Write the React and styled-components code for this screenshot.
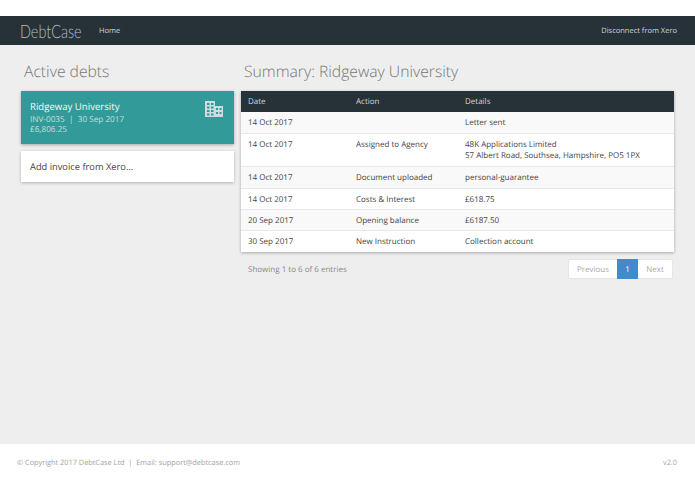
import React from "react";
import styled, { createGlobalStyle } from "styled-components";

const Global = createGlobalStyle`
  html, body { margin: 0; padding: 0; height: 100%; }
  body { background: #fff; font-family: "Open Sans", "Liberation Sans", sans-serif; font-size: 8px; color: #333; text-rendering: geometricPrecision; }
  #root { height: 100%; }
`;
const Page = styled.div`
  height: 494px; display: flex; flex-direction: column; padding-top: 16px; box-sizing: border-box;
`;
const Nav = styled.header`
  height: 29px; background: #263238; display: flex; align-items: center; padding: 0 18px 0 20px; color: #cfd8dc;
  box-shadow: 0 1px 1px rgba(0,0,0,.15);
`;
const Brand = styled.span`
  font-family: Lato, sans-serif; font-weight: 300; font-size: 18.5px; color: #b4bec3; width: 79px;
  transform: scaleX(.78); transform-origin: left center; white-space: nowrap;
`;
const NavLink = styled.a`
  font-size: 7.5px; color: #cfd8dc; margin-right: ${p => (p.$push ? "auto" : "0")};
`;
const Main = styled.main`
  flex: 1; background: #eeeeee; display: grid; grid-template-columns: 213px 433px; column-gap: 7px; padding: 0 21px;
  align-content: start;
`;
const Column = styled.section`
  display: flex; flex-direction: column; min-width: 0;
`;
const Heading = styled.h2`
  margin: 0; font-size: 15.7px; font-weight: 300; color: #757575; height: 46px; line-height: 52px; padding-left: 3px; white-space: nowrap;
`;
const DebtCard = styled.div`
  height: 53px; background: #329a98; color: #fff; box-shadow: 0 1px 3px rgba(0,0,0,.3); padding: 9px 11px 0 9px; box-sizing: border-box;
  display: flex; justify-content: space-between; align-items: flex-start;
`;
const DebtName = styled.div`
  font-size: 9.6px; font-weight: 500; line-height: 14px; margin-bottom: 1px; color: #f2f9f9;
`;
const DebtMeta = styled.div`
  font-size: 8.2px; line-height: 10px; color: #c3e0df; white-space: pre;
`;
const IconSlot = styled.svg`
  width: 18px; height: 17px; margin-top: 1px; color: #cbdedd;
`;
const AddCard = styled.div`
  margin-top: 7px; height: 31px; background: #fff; box-shadow: 0 1px 3px rgba(0,0,0,.25); padding-left: 9px; box-sizing: border-box; display: flex; align-items: center;
  font-size: 9.3px; color: #444;
`;
const TableCard = styled.div`
  background: #fff; box-shadow: 0 1px 3px rgba(0,0,0,.3);
`;
const Table = styled.table`
  width: 100%; border-collapse: separate; border-spacing: 0; table-layout: fixed;
`;
const Th = styled.th`
  background: #263238; color: #cfd8dc; font-size: 8px; font-weight: 400; text-align: left; height: 21px; padding: 0 7px; box-sizing: border-box;
`;
const Row = styled.tr`
  background: ${p => (p.$odd ? "#f9f9f9" : "#fff")};
`;
const Td = styled.td`
  font-size: 8px; line-height: 11px; padding: 5px 7px 0; color: #444; vertical-align: top; box-sizing: border-box;
  height: ${p => p.$h}px; border-top: ${p => (p.$first ? "0" : "1px solid #e8e8e8")};
`;
const Under = styled.div`
  display: flex; justify-content: space-between; align-items: center; padding: 7px 0 0 7px; color: #888;
`;
const Info = styled.span`font-size: 8px;`;
const Pager = styled.nav`
  display: flex; height: 20px; border: 1px solid #e6e6e6; background: #fff; border-radius: 2px; margin-right: 1px; box-sizing: border-box; align-items: stretch;
`;
const PageBtn = styled.span`
  font-size: 8px; display: flex; align-items: center; justify-content: center; width: ${p => p.$w}px;
  color: ${p => (p.$on ? "#fff" : "#aaa")}; background: ${p => (p.$on ? "#428bca" : "transparent")};
  ${p => p.$on && "margin: -1px 0;"}
`;
const Footer = styled.footer`
  height: 50px; background: #fff; display: flex; justify-content: space-between; padding: 14px 18px 0 17px; box-sizing: border-box;
  font-size: 7.35px; color: #a3a3a3; line-height: 11px; white-space: pre;
`;

const rows = [
  ["14 Oct 2017", "", ["Letter sent"], 21],
  ["14 Oct 2017", "Assigned to Agency", ["48K Applications Limited", "57 Albert Road, Southsea, Hampshire, PO5 1PX"], 33],
  ["14 Oct 2017", "Document uploaded", ["personal-guarantee"], 22],
  ["14 Oct 2017", "Costs & Interest", ["£618.75"], 21],
  ["20 Sep 2017", "Opening balance", ["£6187.50"], 21],
  ["30 Sep 2017", "New Instruction", ["Collection account"], 22],
];

const Building = () => (
  <IconSlot viewBox="0 0 18 17">
    <path fill="currentColor" fillRule="evenodd"
      d="M0 16V0h10v5h8v11zM2 2v2h2.500V2zM6 2v2h2.500V2zM2 5.500v2h2.500v-2zM6 5.500v2h2.500v-2zM2 9v2h2.500V9zM6 9v2h2.500V9zM2 12.500v2h2.500v-2zM6 12.500v2h2.500v-2zM11 7v2h2V7zM14.500 7v2h2V7zM11 11v2h2v-2zM14.500 11v2h2v-2z" />
  </IconSlot>
);

export default function App() {
  return (
    <Page>
      <Global />
      <Nav>
        <Brand>DebtCase</Brand>
        <NavLink $push>Home</NavLink>
        <NavLink>Disconnect from Xero</NavLink>
      </Nav>
      <Main>
        <Column>
          <Heading>Active debts</Heading>
          <DebtCard>
            <div>
              <DebtName>Ridgeway University</DebtName>
              <DebtMeta>{"INV-0035  |  30 Sep 2017"}</DebtMeta>
              <DebtMeta>£6,806.25</DebtMeta>
            </div>
            <Building />
          </DebtCard>
          <AddCard>Add invoice from Xero...</AddCard>
        </Column>
        <Column>
          <Heading>Summary: Ridgeway University</Heading>
          <TableCard>
            <Table>
              <colgroup>
                <col style={{ width: 108 }} />
                <col style={{ width: 109 }} />
                <col />
              </colgroup>
              <thead>
                <tr><Th>Date</Th><Th>Action</Th><Th>Details</Th></tr>
              </thead>
              <tbody>
                {rows.map((r, i) => (
                  <Row key={i} $odd={i % 2 === 0}>
                    <Td $h={r[3]} $first={i === 0}>{r[0]}</Td>
                    <Td $h={r[3]} $first={i === 0}>{r[1]}</Td>
                    <Td $h={r[3]} $first={i === 0}>{r[2].map(l => <div key={l}>{l}</div>)}</Td>
                  </Row>
                ))}
              </tbody>
            </Table>
          </TableCard>
          <Under>
            <Info>Showing 1 to 6 of 6 entries</Info>
            <Pager>
              <PageBtn $w={48}>Previous</PageBtn>
              <PageBtn $w={21} $on>1</PageBtn>
              <PageBtn $w={34}>Next</PageBtn>
            </Pager>
          </Under>
        </Column>
      </Main>
      <Footer>
        <span>{"© Copyright 2017 DebtCase Ltd  |  Email: support@debtcase.com"}</span>
        <span>v2.0</span>
      </Footer>
    </Page>
  );
}
